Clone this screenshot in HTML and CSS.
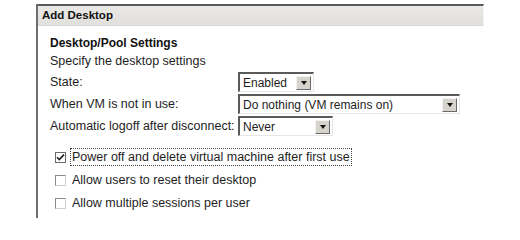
FILE: index.html
```html
<!DOCTYPE html>
<html>
<head>
<meta charset="utf-8">
<link rel="stylesheet" href="styles.css">
</head>
<body>
<div class="panel">
  <div class="header">Add Desktop</div>
  <div class="content">
    <div class="title">Desktop/Pool Settings</div>
    <div class="desc">Specify the desktop settings</div>
    <div class="form">
      <div class="row">
        <div class="label">State:</div>
        <div class="select sel-state"><span class="val">Enabled</span><span class="btn"><span class="tri"></span></span></div>
      </div>
      <div class="row">
        <div class="label">When VM is not in use:</div>
        <div class="select sel-vm"><span class="val">Do nothing (VM remains on)</span><span class="btn"><span class="tri"></span></span></div>
      </div>
      <div class="row">
        <div class="label">Automatic logoff after disconnect:</div>
        <div class="select sel-logoff"><span class="val">Never</span><span class="btn"><span class="tri"></span></span></div>
      </div>
    </div>
    <div class="checks">
      <div class="check">
        <span class="box checked"><svg width="9" height="9" viewBox="0 0 9 9"><path d="M1 4.2 L3.3 6.6 L8 1.6" fill="none" stroke="#222" stroke-width="1.6"/></svg></span>
        <span class="clabel focus">Power off and delete virtual machine after first use</span>
      </div>
      <div class="check">
        <span class="box"></span>
        <span class="clabel">Allow users to reset their desktop</span>
      </div>
      <div class="check">
        <span class="box"></span>
        <span class="clabel">Allow multiple sessions per user</span>
      </div>
    </div>
  </div>
</div>
</body>
</html>
```
FILE: styles.css
```css
html, body {
  margin: 0;
  padding: 0;
  background: #ffffff;
}
body {
  font-family: "Liberation Sans", Arial, sans-serif;
  font-size: 12.5px;
  color: #1e1e1e;
}
.panel {
  margin: 4px 0 0 36px;
  width: 448px;
  height: 214px;
  border-left: 2px solid #6e6e6e;
  box-sizing: border-box;
}
.header {
  height: 22px;
  box-sizing: border-box;
  border-top: 2px solid #595959;
  border-right: 1px solid #f4f4f4;
  border-bottom: 1px solid #d8d6d2;
  background: linear-gradient(#e9e8e4, #e2e0dc);
  font-weight: bold;
  font-size: 11.5px;
  line-height: 19px;
  padding-left: 4px;
  color: #111;
}
.content {
  padding: 10px 0 0 12px;
}
.title {
  font-weight: bold;
  font-size: 12px;
  line-height: 15px;
  color: #111;
}
.desc {
  line-height: 15px;
  margin-top: 3px;
}
.form {
  margin-top: 3px;
  display: flex;
  flex-direction: column;
  gap: 2px;
}
.row {
  display: flex;
  align-items: center;
  height: 20px;
}
.label {
  width: 188px;
  white-space: nowrap;
}
.select {
  display: flex;
  align-items: center;
  height: 20px;
  box-sizing: border-box;
  border-top: 2px solid #5a5a5a;
  border-left: 2px solid #5a5a5a;
  border-bottom: 1px solid #e6e6e6;
  border-right: 1px solid #e6e6e6;
  background: #fff;
  padding-left: 3px;
  font-size: 12px;
}
.val {
  flex: 1;
}
.sel-state { width: 76px; }
.sel-vm { width: 222px; }
.sel-logoff { width: 95px; }
.btn {
  width: 15px;
  height: 14px;
  margin-right: 2px;
  box-sizing: border-box;
  background: #d6d3cc;
  border-top: 1px solid #f2f2f2;
  border-left: 1px solid #f2f2f2;
  border-right: 1px solid #6a6a6a;
  border-bottom: 1px solid #6a6a6a;
  display: flex;
  align-items: center;
  justify-content: center;
}
.tri {
  width: 0;
  height: 0;
  border-left: 3.5px solid transparent;
  border-right: 3.5px solid transparent;
  border-top: 4px solid #111;
}
.checks {
  margin-top: 12px;
  padding-left: 5px;
  display: flex;
  flex-direction: column;
  gap: 5px;
}
.check {
  display: flex;
  align-items: center;
  height: 18px;
}
.box {
  width: 11px;
  height: 11px;
  box-sizing: border-box;
  border: 1px solid #8a8a8a;
  border-right-color: #d0d0d0;
  border-bottom-color: #d0d0d0;
  background: #fff;
  display: flex;
  align-items: center;
  justify-content: center;
  margin-right: 4px;
}
.box.checked {
  border-color: #6a6a6a;
}
.clabel {
  font-size: 12.5px;
  padding: 1px 1px;
  border: 1px solid transparent;
}
.clabel.focus {
  border: 1px dotted #444;
}
```
